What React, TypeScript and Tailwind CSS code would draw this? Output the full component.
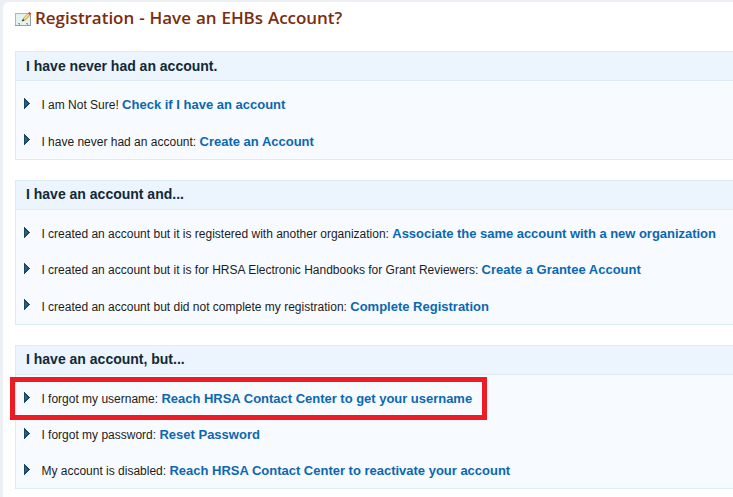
type Row = { text: string; link: string; drop: string; linkSpacing: string };
type Section = { title: string; height: string; titlePad: string; rows: Row[] };

const sections: Section[] = [
  {
    title: "I have never had an account.",
    height: "h-[109px]",
    titlePad: "pt-[5px]",
    rows: [
      { text: "I am Not Sure!", link: "Check if I have an account", drop: "pt-px", linkSpacing: "" },
      { text: "I have never had an account:", link: "Create an Account", drop: "pt-0.5", linkSpacing: "" },
    ],
  },
  {
    title: "I have an account and...",
    height: "h-[145px]",
    titlePad: "pt-1",
    rows: [
      { text: "I created an account but it is registered with another organization:", link: "Associate the same account with a new organization", drop: "pt-px", linkSpacing: "tracking-[-0.03px]" },
      { text: "I created an account but it is for HRSA Electronic Handbooks for Grant Reviewers:", link: "Create a Grantee Account", drop: "pt-px", linkSpacing: "" },
      { text: "I created an account but did not complete my registration:", link: "Complete Registration", drop: "pt-0.5", linkSpacing: "" },
    ],
  },
  {
    title: "I have an account, but...",
    height: "h-[144px]",
    titlePad: "pt-1",
    rows: [
      { text: "I forgot my username:", link: "Reach HRSA Contact Center to get your username", drop: "pt-px", linkSpacing: "tracking-[-0.02px]" },
      { text: "I forgot my password:", link: "Reset Password", drop: "pt-px", linkSpacing: "" },
      { text: "My account is disabled:", link: "Reach HRSA Contact Center to reactivate your account", drop: "pt-px", linkSpacing: "tracking-[-0.01px]" },
    ],
  },
];

function EditIcon() {
  return (
    <svg className="mt-[9px] h-4 w-[17px] shrink-0" viewBox="0 0 17 16" aria-hidden="true">
      <rect x="0.5" y="2.5" width="15" height="12" fill="#e6f1f1" stroke="#aab8b8" />
      <path d="M0 14.5H15.5V5" fill="none" stroke="#8fa0a0" />
      <path d="M3 12.5h2M4.5 13v1M11 12.5h2M12.5 13v1" stroke="#8fa5a5" fill="none" />
      <path d="M7.8 9.6L8.6 7.2L13 2.4L15 4.2L10.4 9Z" fill="#f0d14e" stroke="#a98436" strokeWidth="0.6" />
      <path d="M9.4 7.6L13.6 3.2" stroke="#fff3a8" strokeWidth="0.9" />
      <path d="M13 2.4L14.4 0.8L16.4 2.5L15 4.2Z" fill="#d0564a" />
      <path d="M6.6 10.4L8 8L9.4 9.4Z" fill="#20201a" />
    </svg>
  );
}

function Arrow() {
  return (
    <svg className="mt-1 h-[11px] w-[6px] shrink-0" viewBox="0 0 6 11" shapeRendering="crispEdges" aria-hidden="true">
      <path d="M0 0h1v1h1v1h1v1h1v1h1v1h1v1h-1v1h-1v1h-1v1h-1v1h-1v1h-1Z" fill="#174967" />
      <path d="M1 3h1v1h1v1h1v1h-1v1h-1v1h-1Z" fill="#32617f" />
    </svg>
  );
}

export default function App() {
  return (
    <div className="h-[497px] w-[733px] overflow-hidden bg-[#ecf0f4] pt-0.5 pl-[3px] font-['Liberation_Sans',Arial,sans-serif]">
      <main className="h-full rounded-tl-[6px] bg-white pl-3">
        <header className="flex h-[49px]">
          <EditIcon />
          <h1 className="ml-[3px] pt-1 font-['Open_Sans',sans-serif] text-[17px] leading-[24px] font-semibold tracking-[-0.04px] [word-spacing:0.6px] whitespace-nowrap text-[#7b2d0c]">
            Registration - Have an EHBs Account?
          </h1>
        </header>
        <div className="flex flex-col gap-5">
          {sections.map((section, index) => (
            <section key={section.title} className={`relative border-y border-l border-[#dcebf6] bg-[#f7fbff] ${section.height}`}>
              <h2 className={`h-[29px] border-b border-[#dcebf6] bg-[#ecf4fd] pl-2.5 text-[14px] leading-[18px] font-bold text-[#112936] ${section.titlePad}`}>
                {section.title}
              </h2>
              <ul className="pt-[13px] pl-2">
                {section.rows.map((row) => (
                  <li key={row.text} className="flex h-9 whitespace-nowrap">
                    <Arrow />
                    <p className={`ml-[11.4px] text-[12px] leading-5 text-[#1c1c1c] ${row.drop}`}>
                      {row.text}{" "}
                      <a className={`text-[13px] font-bold text-[#0b67b2] ${row.linkSpacing}`}>{row.link}</a>
                    </p>
                  </li>
                ))}
              </ul>
              {index === 2 && <div className="absolute top-[31px] -left-[6px] h-[43px] w-[477px] border-5 border-[#ed1c24]" />}
            </section>
          ))}
        </div>
      </main>
    </div>
  );
}
